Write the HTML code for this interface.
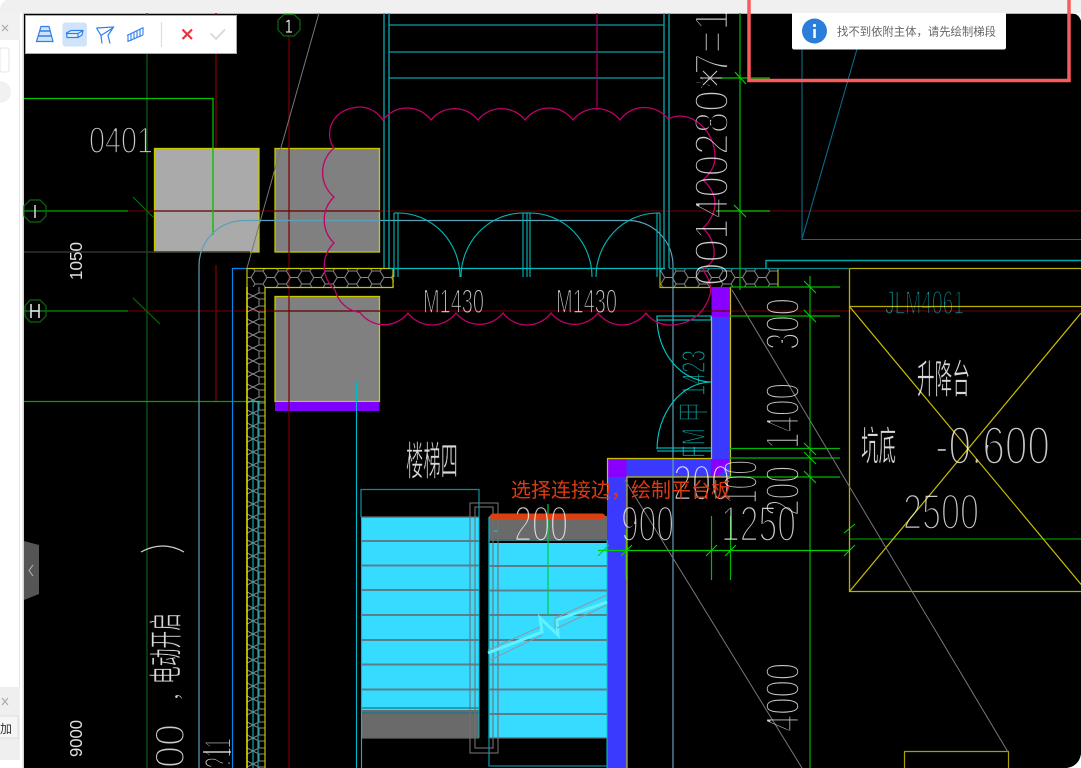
<!DOCTYPE html>
<html><head><meta charset="utf-8"><style>
html,body{margin:0;padding:0;width:1081px;height:768px;overflow:hidden;background:#fff;font-family:"Liberation Sans","Noto Sans CJK SC",sans-serif}
svg{position:absolute;left:0;top:0}
.d{font-family:"Liberation Sans",sans-serif;fill:#cacaca;stroke:#000;stroke-width:2.6;mix-blend-mode:screen}
.s{font-family:"Liberation Sans",sans-serif;fill:#e0e0e0}
.c{font-family:"Liberation Sans","Noto Sans CJK SC",sans-serif;fill:#d8d8d8;stroke:#000;stroke-width:.7;mix-blend-mode:screen}
</style></head><body>
<svg width="1081" height="768" viewBox="0 0 1081 768" xmlns="http://www.w3.org/2000/svg">
<defs>
<pattern id="hx" x="247" y="268" width="23.4" height="19" patternUnits="userSpaceOnUse">
<path d="M0,9.5H4L8,3H16L20,9.5H23.4M4,9.5L8,16H16L20,9.5M8,3L6,0M16,3L18,0M8,16L6,19M16,16L18,19" fill="none" stroke="#8a8a8a" stroke-width="1"/>
</pattern>
<pattern id="hv" x="247" y="270" width="18" height="13" patternUnits="userSpaceOnUse">
<path d="M6,0L12,3V10L6,13L0,10V3ZM12,3L18,3M12,10L18,10" fill="none" stroke="#8a8a8a" stroke-width="1"/>
</pattern>
</defs>
<!-- chrome -->
<rect x="0" y="0" width="1081" height="13" fill="#f0f0f0"/>
<rect x="0" y="13" width="20" height="27" fill="#f1f1f1"/>
<path d="M0,0H6Q1,3 0,8Z" fill="#fff"/>
<rect x="0" y="48" width="9" height="24" rx="2" fill="#fff" stroke="#e4e4e4"/>
<circle cx="0" cy="92" r="11" fill="#f1f1f1"/>
<path d="M2,25L8,31M8,25L2,31" stroke="#aaa" stroke-width="1.2"/>
<rect x="20" y="13" width="4" height="755" fill="#fff"/>
<rect x="19" y="40" width="1" height="647" fill="#e6e6e6"/>
<rect x="22.5" y="13" width="1.5" height="755" fill="#d4d4d4"/>
<rect x="0" y="687" width="20" height="73" fill="#efefef"/>
<path d="M2,698L8,705M8,698L2,705" stroke="#aaa" stroke-width="1.2"/>
<rect x="-2" y="716" width="20" height="22" fill="#f6f6f6" stroke="#ddd"/>
<text x="0" y="733" font-size="12" fill="#333" font-family="'Liberation Sans','Noto Sans CJK SC',sans-serif">加</text>
<!-- canvas -->
<rect x="24" y="13" width="1057" height="755" fill="#000"/>
<rect x="24" y="13" width="1057" height="1" fill="#b4b4b4"/>
<path d="M1081,754V768H1067Q1079,766 1081,754Z" fill="#fff"/>
<path d="M1081,13V21Q1079,14 1072,13Z" fill="#fff"/>

<!-- fills -->
<rect x="154.500" y="148.500" width="104.500" height="103.500" fill="#aaa" stroke="#c8c800" stroke-width="1.300"/>
<rect x="275" y="148.500" width="104.500" height="103.500" fill="#808080" stroke="#c8c800" stroke-width="1.300"/>
<rect x="275" y="296.500" width="104.500" height="105" fill="#808080" stroke="#c8c800" stroke-width="1.300"/>
<rect x="275" y="402" width="104.500" height="9" fill="#8000ff"/>
<rect x="711.500" y="287" width="19" height="30" fill="#8a00ff"/>
<rect x="711.500" y="317" width="19" height="142" fill="#3a3aff"/>
<path d="M607,459H730V477H627V768H607Z" fill="#3a3aff"/>
<rect x="607.500" y="459" width="19" height="18" fill="#8a00ff"/>
<path d="M711,477V459H730Q726,470 716,477Z" fill="#8a00ff"/>
<rect x="361" y="517" width="118" height="193" fill="#36dcff"/>
<rect x="361" y="710" width="118" height="28.500" fill="#6a6a6a"/>
<rect x="489" y="516" width="118" height="25" fill="#6a6a6a"/>
<rect x="489" y="543" width="118" height="195" fill="#36dcff"/>

<!-- axis lines -->
<g fill="none">
<path d="M147,13V768" stroke="#0a5a0a" stroke-width="1.300"/>
<path d="M216,13V148M216,265V401" stroke="#850000" stroke-width="1.200"/>
<path d="M289,36V768" stroke="#7a0000" stroke-width="1.200"/>
<path d="M128,211H1081M128,311H1081" stroke="#620000" stroke-width="1.200"/>
<path d="M24,211H128" stroke="#00a800" stroke-width="1.300"/>
<path d="M24,311H128" stroke="#007a00" stroke-width="1.500"/>
<path d="M133,197L153,217M133,298L160,324" stroke="#0a6a0a" stroke-width="1.200"/>
<path d="M24,98.500H213V235" stroke="#00c000" stroke-width="1.300"/>
<path d="M24,401.500H265" stroke="#0a9a0a" stroke-width="1.300"/>
<path d="M24,252H250" stroke="#333" stroke-width="1.500"/>
<path d="M319,13L247,268" stroke="#777" stroke-width="1"/>
<path d="M284,14.500H294L300,20V30L294,36H284L278,30V20Z" stroke="#0a6a0a" stroke-width="1.200"/>
<path d="M289,20V32M286.500,22L289,20M286,32H292" stroke="#ddd" stroke-width="1.300"/>
<path d="M30,200H40L46,206V216L40,222H30L24,216V206Z" stroke="#0a6a0a" stroke-width="1.200"/>
<path d="M30,300H40L46,306V316L40,322H30L25,316V306Z" stroke="#0a6a0a" stroke-width="1.200"/>
<path d="M35,205V218" stroke="#ddd" stroke-width="1.500"/>
<path d="M31,304V318M39,304V318M31,311H39" stroke="#eee" stroke-width="1.500"/>
<path d="M199,768V265A45,45 0 0 1 245,220.500H628A45,45 0 0 1 673,265V768" stroke="#5c9fb8" stroke-width="1.200"/>
<path d="M232.500,768V268.500H247" stroke="#0a84e8" stroke-width="1.200"/>

<!-- hatch -->
<rect x="247" y="268" width="147" height="19" fill="url(#hx)" stroke="none"/>
<rect x="660" y="268" width="118" height="19" fill="url(#hx)" stroke="none"/>
<rect x="247" y="287" width="18" height="481" fill="url(#hv)" stroke="none"/>
<path d="M265,768V287.500H393V268.500H247V768" stroke="#c8c800" stroke-width="1.200"/>
<path d="M247,287V768" stroke="#eeee00" stroke-width="1.400"/>
<path d="M660,268.500V287.500H711M778,268V287" stroke="#b8b800" stroke-width="1.200"/>
<path d="M253,401V768M258,401V768" stroke="#0aa8b0" stroke-width="1.200"/>
<path d="M247,401.500H260" stroke="#0cc" stroke-width="1.200"/>

<!-- top stair -->
<path d="M384,13V268M389,13V268M664,13V268M669,13V268" stroke="#0aa8b0" stroke-width="1.300"/>
<path d="M389,25H664M389,52H664M389,78H664" stroke="#0aa0a8" stroke-width="1.200"/>
<path d="M597,13V107" stroke="#b00060" stroke-width="1.200"/>

<!-- doors -->
<path d="M394,213V277M398,213V277M523,213V277M527,213V277M530,213V277M657,213V277M660,213V277M394,213H398M523,213H530M657,213H660" stroke="#0cc" stroke-width="1"/>
<path d="M398,213A62,64 0 0 1 460,277M523,213A62,64 0 0 0 461,277M530,213A62,64 0 0 1 592,277M657,213A62,64 0 0 0 596,277" stroke="#0bb" stroke-width="1.100"/>
<path d="M390,268.500H665" stroke="#0bb" stroke-width="1.200"/>
<path d="M766,268V260.500H1081" stroke="#0aa" stroke-width="1.400"/>
<path d="M669,268.500H849" stroke="#0a8a8a" stroke-width="1.200"/>

<!-- right door -->
<path d="M657,316H711V320H657ZM657,448H711M657,451H712" stroke="#0dd" stroke-width="1.100"/>
<path d="M657,318A55,64 0 0 0 711,382A55,68 0 0 0 657,449" stroke="#0cc" stroke-width="1.100"/>

<!-- cloud -->
<path d="M334,148C324,135 330,108 360,107C370,107 378,113 383,120A30,30 0 0 1 431,120A30,30 0 0 1 478,120A30,30 0 0 1 525,120A30,30 0 0 1 573,120A30,30 0 0 1 620,120A30,30 0 0 1 668,119C690,108 715,130 715,157C715,166 710,174 703,180C711,187 715,196 715,203C715,212 710,222 703,228C711,236 715,246 714,256C713,262 708,266 703,270C710,280 712,288 710,295C704,315 688,325 670,325C660,325 651,320 646,313A30,30 0 0 1 598,313A30,30 0 0 1 551,313A30,30 0 0 1 503,313A30,30 0 0 1 456,313A30,30 0 0 1 408,313A30,30 0 0 1 360,312.500A30,30 0 0 1 335,290A32,32 0 0 1 334,243A32,32 0 0 1 334,197A32,32 0 0 1 334,148Z" stroke="#c00068" stroke-width="1.300"/>

<!-- walls outlines -->
<path d="M607.500,500V458.500H711.500V317M730.500,287V477H627V768" stroke="#c8c000" stroke-width="1.200"/>
<path d="M607,540V768" stroke="#0cc" stroke-width="1"/>

<!-- dimension greens -->
<path d="M740,13V290" stroke="#00b000" stroke-width="1.300"/>
<path d="M716,78H770M716,211H770" stroke="#00c800" stroke-width="1.200"/>
<path d="M735,72L746,84M734,205L746,217" stroke="#00d000" stroke-width="1.200"/>
<path d="M810,276V768" stroke="#00a800" stroke-width="1.300"/>
<path d="M730,287H840M730,316H840M730,448.500H840M730,458H840M730,477H840" stroke="#00b800" stroke-width="1.200"/>
<path d="M804,281L816,293M804,310L816,322M804,443L816,455M804,452L816,464M804,471L816,483" stroke="#00d000" stroke-width="1.100"/>
<path d="M598,550.500H850" stroke="#00d000" stroke-width="1.300"/>
<path d="M849,539H1081" stroke="#009000" stroke-width="1.200"/>
<path d="M711.500,516V580M730.500,516V580" stroke="#00b800" stroke-width="1.200"/>
<path d="M626,530V580" stroke="#00c000" stroke-width="1"/>
<path d="M598,556L609,545M621,556L632,545M706,556L717,545M725,556L736,545M844,533L855,524M844,556L855,545" stroke="#00d000" stroke-width="1.100"/>

<!-- lift -->
<path d="M849.500,268.500V591.500H1081M849.500,268.500H1081M849.500,306.500H1081" stroke="#b8b000" stroke-width="1.300"/>
<path d="M849.500,306.500L1087,591.500M849.500,591.500L1081,313" stroke="#c8c000" stroke-width="1.200"/>
<path d="M904.500,768V751.500H1008.500V768" stroke="#a8a000" stroke-width="1.200"/>

<!-- grey diagonals -->
<path d="M732,290L1008,752M625,480L802,768" stroke="#777" stroke-width="1"/>

<!-- far right blue -->
<path d="M802,13V239.500H1081M802,239L857,49" stroke="#0a6a8a" stroke-width="1.100"/>

<!-- stair lines -->
<path d="M361,541H479M361,565.500H479M361,590H479M361,615H479M361,640H479M361,664.500H479M361,689.500H479M489,566H607M489,590.500H607M489,615H607M489,640H607M489,664.500H607M489,689.500H607M489,714H607" stroke="#5a7e8c" stroke-width="2"/>
<path d="M361,517H479M361,738H479M489,738H607" stroke="#666" stroke-width="1.300"/>
<path d="M361,708H479M361,713H479M489,540H607" stroke="#0a7a90" stroke-width="1.300"/>
<path d="M361,517V489.500H479V517" stroke="#0a8a9a" stroke-width="1.300"/>
<path d="M489,517V766H607" stroke="#0a8a9a" stroke-width="1.300"/>
<path d="M356.500,382V768M361.500,517V768" stroke="#0bc" stroke-width="1.100"/>
<path d="M479,517V738M489,517V738" stroke="#0bc" stroke-width="1"/>
<path d="M494,531H498V660" stroke="#0dd" stroke-width="1"/>
<rect x="479.500" y="517" width="8.500" height="221" fill="#000"/>
<rect x="470" y="503" width="28" height="250" stroke="#707070" stroke-width="1.100"/>
<rect x="475" y="507" width="18" height="241" stroke="#707070" stroke-width="1.100"/>
<path d="M548,504V615" stroke="#00c840" stroke-width="1.200"/>
<path d="M488,653L542,632L540,618L558,635L557,620L607,602" stroke="#62f0ff" stroke-width="3"/>
<path d="M488,650L540,627M490,660L542,635M555,618L607,595M557,628L607,605M555,618V628" stroke="#8a9aa0" stroke-width="1"/>
<path d="M141,552Q163,540 184,552" stroke="#ccc" stroke-width="1.200"/>
<path d="M203,752H231" stroke="#eee" stroke-width="1.200"/>
<path d="M700,78H722M703,71L717,85M717,71L703,85" stroke="#ccc" stroke-width="1"/>
</g>
<rect x="490" y="513.500" width="115" height="6" rx="3" fill="#dd4010"/>

<!-- digits -->
<text class="s" font-size="17.500" textLength="38" lengthAdjust="spacingAndGlyphs" transform="translate(82,280) rotate(-90)">1050</text>
<text class="s" font-size="17.500" textLength="37" lengthAdjust="spacingAndGlyphs" transform="translate(82,757) rotate(-90)">9000</text>
<text class="d" x="89" y="153" font-size="37" textLength="64" lengthAdjust="spacingAndGlyphs" style="stroke-width:1.700">0401</text>
<text class="d" x="423" y="313" font-size="34" textLength="61" lengthAdjust="spacingAndGlyphs" style="stroke-width:1.500">M1430</text>
<text class="d" x="556" y="313" font-size="34" textLength="61" lengthAdjust="spacingAndGlyphs" style="stroke-width:1.500">M1430</text>
<text class="d" font-size="48" textLength="47" lengthAdjust="spacingAndGlyphs" transform="translate(728,286) rotate(-90)">00</text>
<text class="d" font-size="48" textLength="85" lengthAdjust="spacingAndGlyphs" transform="translate(728,240) rotate(-90)">1400</text>
<text class="d" font-size="48" textLength="146" lengthAdjust="spacingAndGlyphs" transform="translate(728,155) rotate(-90)">280*7=1</text>
<text class="d" font-size="48" textLength="52" lengthAdjust="spacingAndGlyphs" transform="translate(799,350) rotate(-90)">300</text>
<text class="d" font-size="48" textLength="66" lengthAdjust="spacingAndGlyphs" transform="translate(799,449) rotate(-90)">1400</text>
<text class="d" font-size="48" textLength="50" lengthAdjust="spacingAndGlyphs" transform="translate(799,516) rotate(-90)">200</text>
<text class="d" font-size="48" textLength="44" lengthAdjust="spacingAndGlyphs" transform="translate(757,504) rotate(-90)">100</text>
<text class="d" font-size="48" textLength="69" lengthAdjust="spacingAndGlyphs" transform="translate(799,732) rotate(-90)">4000</text>
<text class="d" x="514" y="541" font-size="50" textLength="54" lengthAdjust="spacingAndGlyphs">200</text>
<text class="d" x="621" y="541" font-size="50" textLength="53" lengthAdjust="spacingAndGlyphs">900</text>
<text class="d" x="673" y="500" font-size="50" textLength="57" lengthAdjust="spacingAndGlyphs">200</text>
<text class="d" x="721" y="541" font-size="50" textLength="75" lengthAdjust="spacingAndGlyphs">1250</text>
<text class="d" x="935" y="464" font-size="54" textLength="115" lengthAdjust="spacingAndGlyphs">-0.600</text>
<text class="d" x="903" y="529" font-size="50" textLength="76" lengthAdjust="spacingAndGlyphs">2500</text>
<text class="d" font-size="42" textLength="44" lengthAdjust="spacingAndGlyphs" transform="translate(184,768) rotate(-90)" style="stroke-width:2">00</text>
<text class="d" x="0" y="0" font-size="38" textLength="30" lengthAdjust="spacingAndGlyphs" transform="translate(231,768) rotate(-90)" style="stroke-width:2">?11</text>
<text class="d" x="885" y="314" font-size="33" textLength="79" lengthAdjust="spacingAndGlyphs" style="fill:#0a9a9a;stroke-width:1.800">JLM4061</text>
<text class="d" font-size="33" textLength="108" lengthAdjust="spacingAndGlyphs" transform="translate(705,458) rotate(-90)" style="fill:#0a9898;stroke-width:1.500;font-family:'Liberation Sans','Noto Sans CJK SC',sans-serif">FM 甲 1423</text>

<!-- cjk cad -->
<text class="c" x="406" y="475" font-size="40" textLength="52" lengthAdjust="spacingAndGlyphs">楼梯四</text>
<text class="c" x="917" y="393" font-size="40" textLength="53" lengthAdjust="spacingAndGlyphs">升降台</text>
<text class="c" x="861" y="460" font-size="40" textLength="35" lengthAdjust="spacingAndGlyphs">坑底</text>
<text class="c" font-size="34" textLength="71" lengthAdjust="spacingAndGlyphs" transform="translate(178,684) rotate(-90)">电动开启</text>
<text class="c" font-size="22" transform="translate(180,702) rotate(-90)">，</text>

<!-- red label -->
<text x="511" y="497" font-size="20" textLength="220" fill="#dd3a10" font-family="'Liberation Sans','Noto Sans CJK SC',sans-serif" lengthAdjust="spacingAndGlyphs">选择连接边，绘制平台板</text>

<!-- collapse handle -->
<path d="M24,541L39,545V594L24,600Z" fill="#555"/>
<path d="M33,565L29,570.500L33,576" fill="none" stroke="#aaa" stroke-width="1.100"/>

<!-- toolbar -->
<rect x="25.500" y="15.500" width="211" height="38" fill="#fff" stroke="#aaa"/>
<rect x="62.500" y="22.500" width="24.500" height="24" rx="3" fill="#cfe4fb"/>
<g fill="none" stroke="#2f80e8" stroke-width="1.200">
<path d="M41,26.500H49L53,41.500H36.500Z" fill="#cfe2fa"/>
<path d="M39.500,31H50.500M38.500,36H51.500" stroke-width="1.600"/>
<path d="M66.500,33L71,30.500H83L82,35L78,37.500H67Z" fill="#e6f1fd"/>
<path d="M66.500,33.500H78V37.500M78,33.500L83,30.500"/>
<path d="M96.500,28L113.500,27L108,35.500L110,43.500M96.500,28L101,35.500L102,43.500M101,35.500L113.500,27.500" />
<path d="M127,35.500L143.500,27.500M127.500,41.500L143,35" />
<path d="M128,35V42M131,34V41M134,32.500V39.500M137,31V38M140,29.500V36.500M143,28V35" stroke-width="1.100"/>
</g>
<path d="M161.500,22V47" stroke="#ddd" stroke-width="1.200"/>
<path d="M182.500,29.500L192,39M192,29.500L182.500,39" stroke="#e8343c" stroke-width="2.200" fill="none"/>
<path d="M210.500,33.500L216,39L225,29.500" stroke="#d8d8d8" stroke-width="1.800" fill="none"/>

<!-- message -->
<path d="M792,13H1006V47Q1006,49.500 1004,49.500H794Q792,49.500 792,47Z" fill="#fff"/>
<circle cx="814.500" cy="31" r="12.500" fill="#2a7dd8"/>
<rect x="813.300" y="29" width="2.500" height="9" fill="#fff"/>
<circle cx="814.500" cy="25.500" r="1.600" fill="#fff"/>
<text x="837" y="35.500" font-size="11.300" fill="#666" textLength="159" lengthAdjust="spacingAndGlyphs" font-family="'Liberation Sans','Noto Sans CJK SC',sans-serif">找不到依附主体，请先绘制梯段</text>

<!-- annotation -->
<path d="M749,0V80.500H1069V0" fill="none" stroke="#f95a5a" stroke-width="3.500"/>
</svg>
</body></html>
